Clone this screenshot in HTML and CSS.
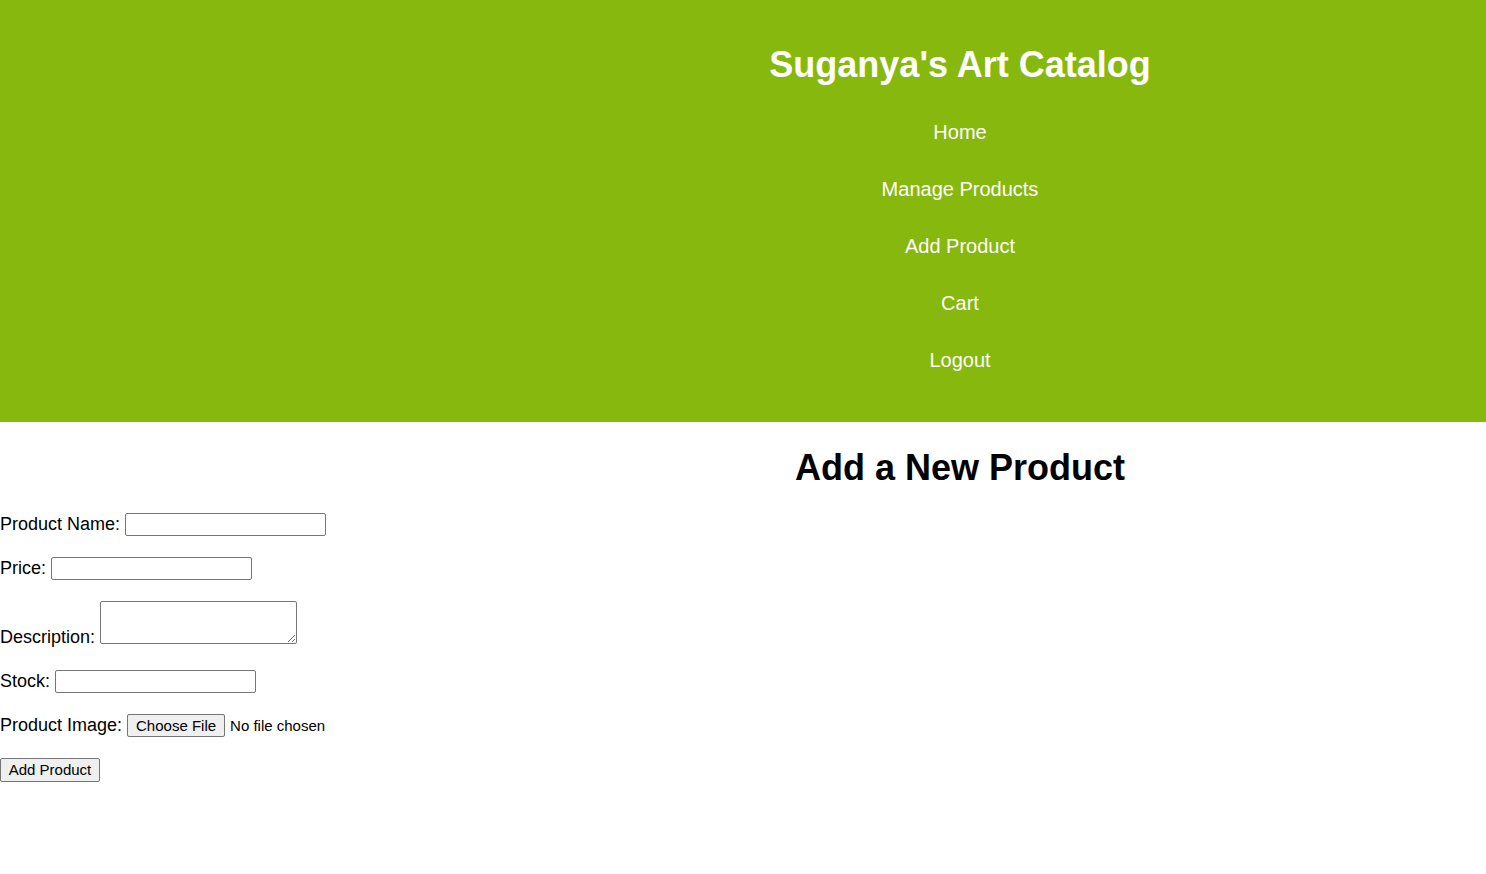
FILE: index.html
```html
<!DOCTYPE html>
<html lang="en">
<head>
<meta charset="utf-8">
<title>Add Product - Suganya's Art Catalog</title>
<link rel="stylesheet" href="styles.css">
</head>
<body>
<header class="site-header">
  <div class="header-inner">
    <h1 class="site-title">Suganya's Art Catalog</h1>
    <nav class="nav">
      <a href="#" class="nav-link">Home</a>
      <a href="#" class="nav-link">Manage Products</a>
      <a href="#" class="nav-link">Add Product</a>
      <a href="#" class="nav-link">Cart</a>
      <a href="#" class="nav-link">Logout</a>
    </nav>
  </div>
</header>
<main class="main">
  <h2 class="page-title">Add a New Product</h2>
  <form class="product-form">
    <div class="field">
      <label class="label" for="name">Product Name:</label>
      <input class="text-input" type="text" id="name">
    </div>
    <div class="field">
      <label class="label" for="price">Price:</label>
      <input class="text-input" type="text" id="price">
    </div>
    <div class="field field-area">
      <label class="label label-area" for="desc">Description:</label>
      <textarea class="textarea" id="desc"></textarea>
    </div>
    <div class="field">
      <label class="label" for="stock">Stock:</label>
      <input class="text-input" type="text" id="stock">
    </div>
    <div class="field">
      <label class="label" for="img">Product Image:</label>
      <span class="file-wrap"><button type="button" class="btn file-btn">Choose File</button><span class="file-status">No file chosen</span></span>
    </div>
    <div class="field">
      <button type="button" class="btn submit-btn">Add Product</button>
    </div>
  </form>
</main>
</body>
</html>
```

FILE: styles.css
```css
html, body {
  margin: 0;
  padding: 0;
  background: #ffffff;
  font-family: "Liberation Sans", Arial, sans-serif;
  color: #000000;
}

.site-header {
  background: #87b80e;
  height: 422px;
  box-sizing: border-box;
  padding: 0 40px 0 474px;
}

.header-inner {
  text-align: center;
  padding-top: 44px;
}

.site-title {
  margin: 0;
  font-size: 36px;
  line-height: 42px;
  font-weight: bold;
  color: #ffffff;
}

.nav {
  display: flex;
  flex-direction: column;
  align-items: center;
  margin-top: 35px;
  gap: 34px;
}

.nav-link {
  color: #ffffff;
  text-decoration: none;
  font-size: 20px;
  line-height: 23px;
}

.main {
  padding-left: 0;
}

.page-title {
  margin: 25px 0 0 474px;
  padding-right: 40px;
  text-align: center;
  font-size: 36px;
  line-height: 42px;
  font-weight: bold;
}

.product-form {
  margin-top: 24px;
  font-size: 18px;
}

.field {
  display: flex;
  align-items: center;
  gap: 5px;
  height: 23px;
  margin-bottom: 21px;
}

.field-area {
  align-items: flex-end;
  height: 43px;
  margin-bottom: 26px;
}

.label {
  line-height: 21px;
  white-space: nowrap;
}

.label-area {
  margin-bottom: -4px;
}

.text-input {
  width: 201px;
  height: 23px;
  box-sizing: border-box;
  border: 1px solid #767676;
  border-radius: 2px;
  padding: 1px 2px;
  font-size: 13px;
  background: #fff;
}

.textarea {
  width: 197px;
  height: 43px;
  box-sizing: border-box;
  border: 1px solid #767676;
  border-radius: 2px;
  padding: 2px;
  font-family: "Liberation Mono", monospace;
  font-size: 13px;
  resize: both;
  margin: 0;
}

.file-wrap {
  display: inline-flex;
  align-items: center;
  gap: 5px;
  white-space: nowrap;
}

.btn {
  font-family: "Liberation Sans", Arial, sans-serif;
  font-size: 15px;
  color: #000;
  background: #efefef;
  border: 1px solid #767676;
  border-radius: 2px;
  height: 23px;
  box-sizing: border-box;
  padding: 0;
  line-height: 21px;
  white-space: nowrap;
}

.file-btn {
  width: 98px;
}

.file-status {
  font-size: 15px;
}

.submit-btn {
  width: 100px;
  height: 24px;
}
```
